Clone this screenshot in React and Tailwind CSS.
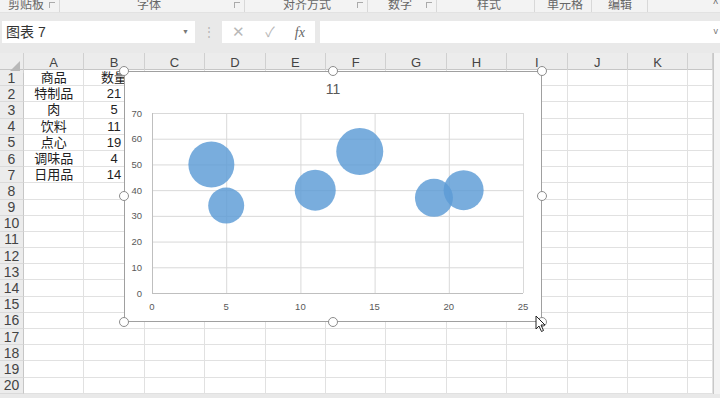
import React from 'react';

const COLS = ['A', 'B', 'C', 'D', 'E', 'F', 'G', 'H', 'I', 'J', 'K', ''];
const DATA = {
    1: ['商品', '数量'],
    2: ['特制品', '21'],
    3: ['肉', '5'],
    4: ['饮料', '11'],
    5: ['点心', '19'],
    6: ['调味品', '4'],
    7: ['日用品', '14'],
};
const ROWS = Array.from({ length: 20 }, (_, i) => i + 1);

// chart geometry (relative to chart frame)
const PL = 28, PR = 399, PT = 42, PB = 222;
const xPos = (v) => PL + (v * (PR - PL)) / 25;
const yPos = (v) => PB - (v * (PB - PT)) / 70;
const BUBBLES = [
    { x: 4, y: 50, r: 23 },
    { x: 5, y: 34, r: 18 },
    { x: 11, y: 40, r: 20.5 },
    { x: 14, y: 55, r: 23.5 },
    { x: 19, y: 37, r: 19 },
    { x: 21, y: 40, r: 20 },
];

function Ribbon() {
    const groups = [
        { label: '剪贴板', cls: 'w-[60px] pl-[8px]', launcher: true },
        { label: '字体', cls: 'w-[185px] pl-[77px]', launcher: true },
        { label: '对齐方式', cls: 'w-[123px] pl-[38px]', launcher: true },
        { label: '数字', cls: 'w-[69px] pl-[20px]', launcher: true },
        { label: '样式', cls: 'w-[98px] pl-[40px]', launcher: false },
        { label: '单元格', cls: 'w-[57px] pl-[12px]', launcher: false },
        { label: '编辑', cls: 'w-[56px] pl-[16px]', launcher: false },
    ];
    return (
        <div className="h-[13px] bg-[#f3f3f3] flex overflow-hidden border-b border-[#e2e2e2]">
            {groups.map((g) => (
                <div key={g.label} className={`${g.cls} relative flex justify-start border-r border-[#d8d8d8] shrink-0`}>
                    <span className="text-[12px] leading-[12px] -mt-[1px] text-[#666]">{g.label}</span>
                    {g.launcher && (
                        <span className="absolute right-[4px] top-[2px] w-[6px] h-[6px] border-l border-t border-[#aaa]"></span>
                    )}
                </div>
            ))}
            <div className="flex-1 flex justify-end pr-[2px]">
                <span className="text-[10px] leading-[10px] text-[#666]">^</span>
            </div>
        </div>
    );
}

function FormulaBar() {
    return (
        <div className="h-[40px] bg-[#e9e9e9] flex items-center pl-[2px] pb-[9px] pt-[7px]">
            <div className="w-[193px] h-[22px] bg-white flex items-center justify-between px-[4px]">
                <span className="text-[14px] text-[#333]">图表 7</span>
                <span className="text-[7px] text-[#777] pr-[2px]">▼</span>
            </div>
            <div className="w-[27px] flex justify-center text-[#b5b5b5] text-[12px]">⋮</div>
            <div className="w-[93px] h-[22px] bg-white flex items-center justify-around text-[#b8b8b8]">
                <span className="text-[15px]">✕</span>
                <span className="text-[14px]">✓</span>
                <span className="text-[14px] italic text-[#666]" style={{ fontFamily: '"Liberation Serif", serif' }}>fx</span>
            </div>
            <div className="flex-1 h-[22px] bg-white ml-[5px] flex items-center justify-end pr-[2px]">
                <span className="text-[9px] text-[#777]">v</span>
            </div>
        </div>
    );
}

function Handle({ className }) {
    return <div className={`absolute w-[10px] h-[10px] rounded-full bg-white border border-[#8c8c8c] ${className}`}></div>;
}

function Chart() {
    return (
        <div className="absolute left-[124px] top-[18px] w-[418px] h-[251px] bg-white border border-[#a0a0a0]">
            <svg width="418" height="251" className="absolute left-[-1px] top-[-1px]" style={{ fontFamily: '"Liberation Sans", sans-serif' }}>
                <text x="209" y="23" textAnchor="middle" fontSize="14" fill="#595959">11</text>
                {[0, 10, 20, 30, 40, 50, 60, 70].map((v) => (
                    <g key={v}>
                        <line x1={PL} x2={PR} y1={yPos(v) + 0.5} y2={yPos(v) + 0.5} stroke={v === 0 ? '#bfbfbf' : '#d9d9d9'} />
                        <text x="18" y={yPos(v) + 3.5} textAnchor="end" fontSize="9.5" fill="#595959">{v}</text>
                    </g>
                ))}
                {[0, 5, 10, 15, 20, 25].map((v) => (
                    <g key={v}>
                        <line x1={xPos(v) + 0.5} x2={xPos(v) + 0.5} y1={PT} y2={PB} stroke={v === 0 ? '#bfbfbf' : '#d9d9d9'} />
                        <text x={xPos(v)} y="239" textAnchor="middle" fontSize="9.5" fill="#595959">{v}</text>
                    </g>
                ))}
                {BUBBLES.map((b, i) => (
                    <circle key={i} cx={xPos(b.x)} cy={yPos(b.y)} r={b.r} fill="#5b9bd5" fillOpacity="0.82" />
                ))}
            </svg>
            <Handle className="left-[-6px] top-[-6px]" />
            <Handle className="left-[203px] top-[-6px]" />
            <Handle className="right-[-6px] top-[-6px]" />
            <Handle className="left-[-6px] top-[119px]" />
            <Handle className="right-[-6px] top-[119px]" />
            <Handle className="left-[-6px] bottom-[-6px]" />
            <Handle className="left-[203px] bottom-[-6px]" />
            <Handle className="right-[-6px] bottom-[-6px]" />
            <svg width="12" height="18" viewBox="0 0 12 18" className="absolute left-[410px] top-[243px]">
                <path d="M1 1 L1 14 L4 11 L6.5 16.5 L8.5 15.5 L6 10 L10 10 Z" fill="white" stroke="#222" strokeWidth="1" strokeLinejoin="round" />
            </svg>
        </div>
    );
}

function Sheet() {
    const grid = 'grid grid-cols-[24px_repeat(11,60.4px)_1fr_7px]';
    return (
        <div className="relative">
            <div className={`${grid} h-[17px] bg-[#ececec] border-b border-[#c6c6c6]`}>
                <div className="relative border-r border-[#d0d0d0]">
                    <div className="absolute right-[3px] bottom-[2px] w-0 h-0 border-l-[10px] border-l-transparent border-b-[10px] border-b-[#b8b8b8]"></div>
                </div>
                {COLS.map((c, i) => (
                    <div key={i} className="flex items-center justify-center text-[13px] text-[#444] border-r border-[#d0d0d0]">{c}</div>
                ))}
                <div className="bg-[#f3f3f3] border-l border-[#c8c8c8]"></div>
            </div>
            {ROWS.map((r) => (
                <div key={r} className={`${grid} h-[16.2px]`}>
                    <div className="flex items-center justify-center bg-[#ececec] text-[14px] leading-none text-[#444] border-r border-[#c6c6c6] border-b border-b-[#dadada]">{r}</div>
                    {COLS.map((c, i) => (
                        <div key={i} className="flex items-center justify-center text-[13px] leading-none text-[#222] border-r border-b border-[#e1e1e1] bg-white">
                            {DATA[r] && DATA[r][i]}
                        </div>
                    ))}
                    <div className="bg-[#f3f3f3] border-l border-[#c8c8c8]"></div>
                </div>
            ))}
            <Chart />
        </div>
    );
}

export default function App() {
    return (
        <div
            className="w-[720px] h-[398px] overflow-hidden bg-[#e9e9e9]"
            style={{ fontFamily: '"Liberation Sans", "Noto Sans CJK SC", sans-serif' }}
        >
            <Ribbon />
            <FormulaBar />
            <Sheet />
        </div>
    );
}
